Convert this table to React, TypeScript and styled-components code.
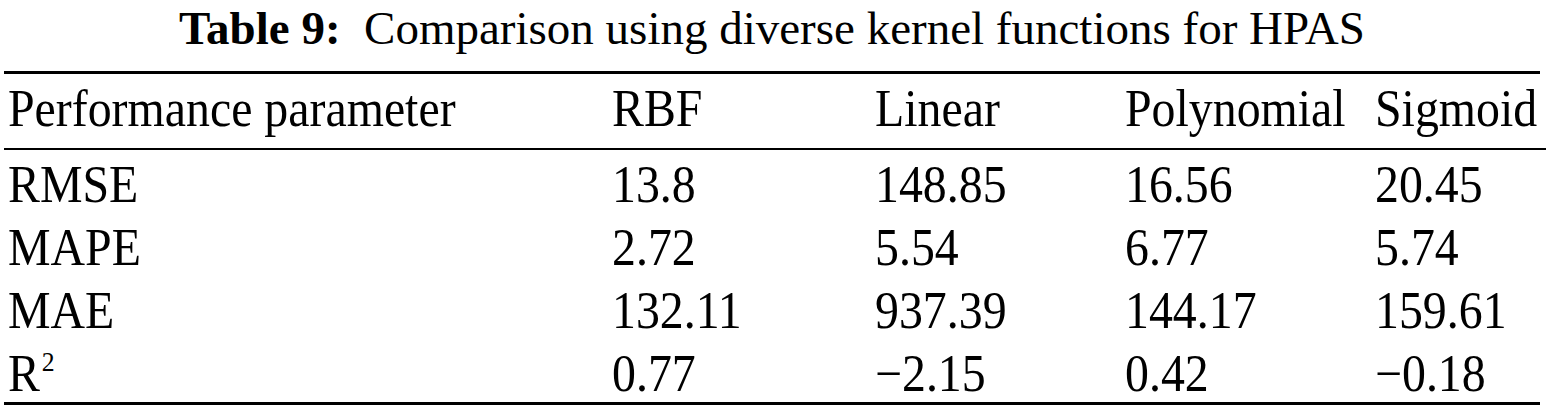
import React from "react";
import styled, { createGlobalStyle } from "styled-components";

const Global = createGlobalStyle`
  html, body { margin: 0; padding: 0; background: #fff; }
  body { font-family: "Liberation Serif", "Times New Roman", serif; color: #000; }
`;

const Wrap = styled.div`
  width: 1546px;
  height: 412px;
  padding: 0 6px 0 4px;
  box-sizing: border-box;
  display: flex;
  flex-direction: column;
`;

const Caption = styled.div`
  font-size: 47px;
  line-height: 56px;
  text-align: center;
  height: 71px;
  white-space: pre;
`;

const Bold = styled.span`
  font-weight: bold;
`;

const Grid = styled.div`
  display: grid;
  grid-template-columns: 604px 263px 250px 250px 1fr;
  border-top: 3px solid #000;
  border-bottom: 3px solid #000;
`;

const Row = styled.div`
  display: contents;
`;

const Cell = styled.div<{ $head?: boolean }>`
  font-size: 52px;
  height: ${(p) => (p.$head ? "76px" : "63px")};
  line-height: ${(p) => (p.$head ? "70px" : "63px")};
  padding: ${(p) => (p.$head ? "0 0 6px 4px" : "3px 0 0 4px")};
  white-space: nowrap;
  border-bottom: ${(p) => (p.$head ? "2px solid #000" : "none")};
  box-sizing: border-box;
  overflow: visible;
`;

const Text = styled.span`
  display: inline-block;
  transform: scaleX(0.92);
  transform-origin: left center;
`;

const Sup = styled.sup`
  font-size: 28px;
  vertical-align: 20px;
  line-height: 0;
  margin-left: 2px;
`;

const head = ["Performance parameter", "RBF", "Linear", "Polynomial", "Sigmoid"];
const rows: React.ReactNode[][] = [
  ["RMSE", "13.8", "148.85", "16.56", "20.45"],
  ["MAPE", "2.72", "5.54", "6.77", "5.74"],
  ["MAE", "132.11", "937.39", "144.17", "159.61"],
  [
    <>
      R<Sup>2</Sup>
    </>,
    "0.77",
    "\u22122.15",
    "0.42",
    "\u22120.18",
  ],
];

export default function App() {
  return (
    <Wrap>
      <Global />
      <Caption>
        <Bold>Table 9:</Bold>{"  "}Comparison using diverse kernel functions for HPAS
      </Caption>
      <Grid>
        <Row>
          {head.map((h, i) => (
            <Cell $head key={i}>
              <Text>{h}</Text>
            </Cell>
          ))}
        </Row>
        {rows.map((r, ri) => (
          <Row key={ri}>
            {r.map((c, ci) => (
              <Cell key={ci}>
                <Text>{c}</Text>
              </Cell>
            ))}
          </Row>
        ))}
      </Grid>
    </Wrap>
  );
}
